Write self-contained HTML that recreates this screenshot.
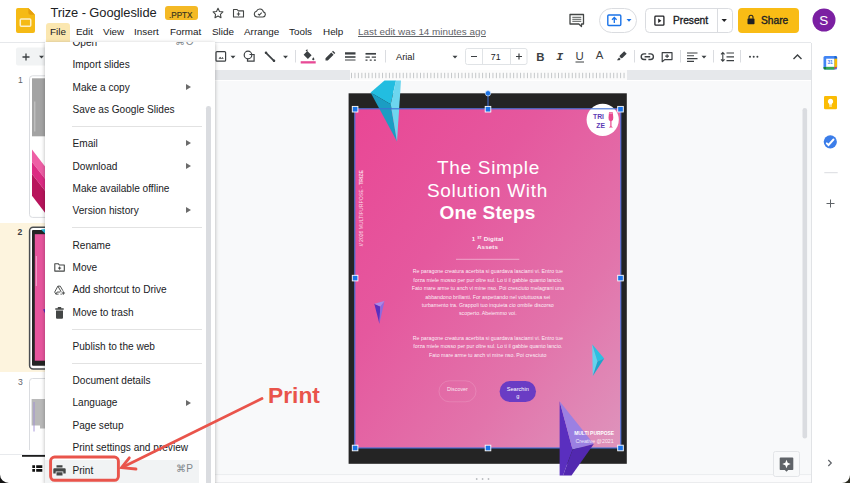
<!DOCTYPE html>
<html lang="en">
<head>
<meta charset="utf-8">
<title>Trize - Googleslide</title>
<style>
*{box-sizing:border-box;margin:0;padding:0}
html,body{width:850px;height:483px;overflow:hidden;background:#fff}
body{position:relative;font-family:"Liberation Sans",sans-serif;color:#202124}
.a{position:absolute}
.t{position:absolute;white-space:nowrap;line-height:1}
svg{position:absolute;overflow:visible}
/* header */
#title{left:50.400px;top:6.900px;font-size:12.900px;color:#202124;letter-spacing:-.08px}
#badge{left:165px;top:5.700px;width:32.500px;height:14.800px;border-radius:3px;background:#f4b925;}
#badge span{left:4px;top:4px;font-size:9.700px;color:#3a3420;transform:scaleX(.84);transform-origin:0 50%;-webkit-text-stroke:.2px #3a3420}
.mb{top:26.5px;font-size:9.9px;color:#202124}
#fileHi{left:46px;top:23px;width:24px;height:19px;background:#fbe7b0;border-radius:3px 3px 0 0}
/* toolbar */
#tbline{left:0;top:42px;width:811px;height:1px;background:#e6e8eb}
#ruler{left:215px;top:70.400px;width:596px;height:10px;background:#e6e8eb}
#rulerw{left:349.500px;top:70.400px;width:277px;height:10px;background:#fbfbfb}
#canvas{left:215px;top:80.500px;width:596px;height:403px;background:#f8f9fa}
/* filmstrip */
#film{left:0;top:72px;width:214px;height:411px;background:#fff}
#selrow{left:0;top:223.300px;width:46px;height:149px;background:#fdf4de}
/* dropdown */
#menu{left:44.600px;top:41.500px;width:170.400px;height:442px;background:#fff;box-shadow:0 1px 4px rgba(0,0,0,.3);overflow:hidden}
.mi{left:27px;font-size:10.100px;color:#202124;margin-top:1.700px}
.sep{left:26.500px;width:130px;height:1px;background:#e2e2e2}
.arr{left:140.700px;width:0;height:0;border-left:5px solid #6b6b6b;border-top:3px solid transparent;border-bottom:3px solid transparent}
.fn{font-size:8.600px;color:#5f6368}
.sc{font-size:10.100px;color:#80868b;letter-spacing:.3px}
/* side panel */
#side{left:811px;top:43px;width:39px;height:440px;background:#fff;border-left:1px solid #e1e3e6}
</style>
</head>
<body>
<!-- HEADER -->
<div class="a" id="hdr" style="left:0;top:0;width:850px;height:42px;background:#fff"></div>
<svg style="left:16px;top:7.500px" width="19" height="25" viewBox="0 0 20 26" preserveAspectRatio="none"><path d="M2 0h11l7 7v17a2 2 0 0 1-2 2H2a2 2 0 0 1-2-2V2a2 2 0 0 1 2-2z" fill="#f5ba15"/><path d="M13 0l7 7h-5a2 2 0 0 1-2-2z" fill="#e59f0c"/><rect x="4.5" y="11.5" width="11" height="7.5" rx="1" fill="none" stroke="#fdf0c8" stroke-width="1.6"/></svg>
<div class="t" id="title">Trize - Googleslide</div>
<div class="a" id="badge"><span class="t">.PPTX</span></div>
<div class="a" id="fileHi"></div>
<div class="t mb" style="left:50px">File</div>
<div class="t mb" style="left:76px">Edit</div>
<div class="t mb" style="left:103px">View</div>
<div class="t mb" style="left:134px">Insert</div>
<div class="t mb" style="left:170px">Format</div>
<div class="t mb" style="left:212px">Slide</div>
<div class="t mb" style="left:244px">Arrange</div>
<div class="t mb" style="left:289px">Tools</div>
<div class="t mb" style="left:323px">Help</div>
<div class="t mb" id="lastedit" style="left:358px;color:#5f6368;text-decoration:underline">Last edit was 14 minutes ago</div>

<div class="a" id="tbline"></div>
<div class="a" id="toolbar" style="left:0;top:43px;width:810px;height:28px;background:#fff"></div>
<div class="a" id="ruler"></div><div class="a" id="rulerw"></div>
<div class="a" id="canvas"></div>
<div class="a" id="film"></div>
<div class="a" id="selrow"></div>

<div class="a" id="side"></div>
<!-- ICON LAYER -->
<svg id="icons" style="left:0;top:0" width="850" height="483" viewBox="0 0 850 483" fill="none" stroke="none">
<!-- header icons -->
<g stroke="#444746" stroke-width="1.1" fill="none" stroke-linejoin="round">
<path d="M218 8.3l1.5 3.2 3.4.4-2.5 2.4.6 3.4-3-1.7-3 1.7.6-3.4-2.5-2.4 3.4-.4z"/>
<path d="M233.5 9.5h3.6l1.2 1.4h5.2v6.1h-10z"/><path d="M238.5 12.3v3.4M236.8 14h3.4"/>
<path d="M257 17h6a2.6 2.6 0 0 0 .4-5.1 3.6 3.6 0 0 0-6.9-.6A2.9 2.9 0 0 0 257 17z"/><path d="M258 13.8l1.3 1.3 2.4-2.4"/>
</g>
<!-- comment icon -->
<g stroke="#444746" stroke-width="1.3" fill="none" stroke-linejoin="round"><path d="M570 14.5h13.5v9.5h-2v2.6l-2.6-2.6H570z"/><path d="M572.3 17.3h9M572.3 19.3h9M572.3 21.3h9" stroke-width=".9"/></g>
<!-- present-to pill -->
<rect x="599.5" y="8.5" width="37" height="24" rx="12" fill="#fff" stroke="#dadce0"/>
<rect x="607.8" y="15" width="13" height="10.5" rx="1" fill="none" stroke="#1a73e8" stroke-width="1.4"/>
<path d="M614.3 23v-5M612 19.8l2.3-2.3 2.3 2.3" stroke="#1a73e8" stroke-width="1.3" fill="none"/>
<path d="M626.5 19h5l-2.5 2.8z" fill="#1a73e8"/>
<!-- present button -->
<rect x="645.5" y="8.5" width="87" height="24" rx="4" fill="#fff" stroke="#dadce0"/>
<path d="M717.5 8.5v24" stroke="#dadce0"/>
<rect x="654.900" y="16.200" width="9" height="9" rx=".8" fill="none" stroke="#202124" stroke-width="1.300"/>
<path d="M658.200 18.500v4.400l3.200-2.200z" fill="#202124"/>
<path d="M721.5 19h5.4l-2.7 3z" fill="#202124"/>
<!-- share -->
<rect x="738" y="8" width="61" height="25" rx="4" fill="#f9bc15"/>
<rect x="747.5" y="18.6" width="7" height="5.6" rx=".8" fill="#202124"/><path d="M749 18.8v-1.5a2 2 0 0 1 4 0v1.5" stroke="#202124" stroke-width="1.1"/>
<!-- avatar -->
<circle cx="824" cy="20" r="11.5" fill="#7b1fa2"/>

<!-- toolbar -->
<rect x="16" y="47.5" width="34" height="18" rx="2" fill="#f1f3f4"/>
<path d="M22.5 57h7M26 53.5v7" stroke="#3c4043" stroke-width="1.3"/>
<path d="M39 55.8h5l-2.5 2.8z" fill="#3c4043"/>
<g stroke="#3c4043" stroke-width="1.2" fill="none">
<rect x="216" y="51.6" width="9.6" height="9.6" rx="1"/><path d="M218.5 58.7l1.6-2 1.3 1.5 1-1.2 1.4 1.7z" fill="#3c4043" stroke="none"/>
<circle cx="248" cy="55" r="3.8"/><path d="M249.5 54.5h4.6v6.7h-6.6v-2.4" />
<path d="M266 52.800l8 8" stroke-width="1.700" stroke-linecap="round"/><circle cx="266" cy="52.800" r=".7" fill="#3c4043"/><circle cx="274" cy="60.800" r=".7" fill="#3c4043"/>
</g>
<path d="M230.5 55.8h5l-2.5 2.8zM283 55.8h5l-2.5 2.8z" fill="#3c4043"/>
<path d="M295.5 50v12.5M385.5 50v12.5M634.5 50v12.5M680.5 50v12.5M713.5 50v12.5M740.5 50v12.5" stroke="#dadce0"/>
<!-- fill bucket -->
<path d="M307.3 51l4.3 4.3-3.7 3.7-4.3-4.3 3.7-3.7zM303.8 54.9h7.4" fill="#3c4043"/><path d="M306 51l1.5-1.2" stroke="#3c4043" stroke-width="1.1"/>
<path d="M313.3 57.2s1.1 1.3 1.1 2a1.1 1.1 0 0 1-2.2 0c0-.7 1.1-2 1.1-2z" fill="#3c4043"/>
<rect x="300.7" y="61.2" width="15" height="2.3" fill="#e84a96"/>
<!-- pencil -->
<path d="M325.5 60.5v-2.3l5.8-5.8 2.3 2.3-5.8 5.8zM332 51.700l1-1 2.300 2.300-1 1z" fill="#3c4043"/>
<!-- line weight -->
<path d="M345 53.400h10.500" stroke="#3c4043" stroke-width="2.300"/><path d="M345 57h10.500" stroke="#3c4043" stroke-width="1.600"/><path d="M345 60h10.500" stroke="#3c4043" stroke-width="1"/>
<!-- dash -->
<path d="M365.500 53.800h10.500" stroke="#3c4043" stroke-width="1.700"/><path d="M365.500 57.200h4.300M371.700 57.200h4.300" stroke="#3c4043" stroke-width="1.300"/><path d="M365.500 60.200h2M369.700 60.200h2M373.900 60.200h2" stroke="#3c4043" stroke-width="1.200"/>
<path d="M452.500 55.800h5l-2.500 2.800z" fill="#3c4043"/>
<!-- font size box -->
<rect x="465.500" y="48.500" width="61.500" height="16" rx="2" fill="#fff" stroke="#e0e3e6"/>
<path d="M482.500 48.500v16M510.500 48.500v16" stroke="#e0e3e6"/>
<path d="M471 56.500h6M516 56.500h6M519 53.500v6" stroke="#3c4043" stroke-width="1.200"/>
<!-- U underline, A -->
<path d="M575.500 62h8.500" stroke="#3c4043" stroke-width="1"/>
<!-- highlighter -->
<path d="M624.200 51.200l2.500 2.500-4.300 4.300-1.300.2-1.600-1.600.3-1.200zM619 57.400l1.700 1.700-1.200 1.200h-2.600z" fill="#3c4043"/>
<!-- link -->
<g stroke="#3c4043" stroke-width="1.300" fill="none">
<path d="M646.200 53.900h-2.200a2.800 2.800 0 0 0 0 5.600h2.200M648.400 53.900h2.200a2.800 2.800 0 0 1 0 5.600h-2.200M644.600 56.700h5.600" stroke-width="1.400"/>
<path d="M662.200 52.600h9.800v7h-7.300l-2.500 2.100z" stroke-linejoin="round" stroke-width="1.200"/><path d="M667.100 54.200v3.800M665.200 56.100h3.800" stroke-width="1.100"/>
</g>
<!-- align -->
<path d="M687 53h10.500M687 55.800h7M687 58.600h10.500M687 61.400h7" stroke="#3c4043" stroke-width="1.100"/>
<path d="M701.500 55.800h5l-2.500 2.800z" fill="#3c4043"/>
<!-- line spacing -->
<path d="M726.500 53h7.500M726.500 56.800h7.500M726.500 60.600h7.500" stroke="#3c4043" stroke-width="1.200"/>
<path d="M722.800 52.500v8.600M721 54.300l1.800-1.800 1.800 1.800M721 59.300l1.800 1.800 1.800-1.800" stroke="#3c4043" stroke-width="1.100"/>
<circle cx="750" cy="56.800" r="1" fill="#3c4043"/><circle cx="753.700" cy="56.800" r="1" fill="#3c4043"/><circle cx="757.400" cy="56.800" r="1" fill="#3c4043"/>
<path d="M793.500 59l4-4 4 4" stroke="#3c4043" stroke-width="1.400"/>
</svg>

<!-- CANVAS EXTRAS -->
<svg id="cv" style="left:0;top:0" width="850" height="483" viewBox="0 0 850 483">
<path d="M351.50 72.8v5.4M354.95 72.8v5.4M358.40 72.8v5.4M361.85 72.8v5.4M365.30 72.8v5.4M368.75 72.8v5.4M372.20 72.8v5.4M375.65 72.8v5.4M379.10 72.8v5.4M382.55 72.8v5.4M386.00 72.8v5.4M389.45 72.8v5.4M392.90 72.8v5.4M396.35 72.8v5.4M399.80 72.8v5.4M403.25 72.8v5.4M406.70 72.8v5.4M410.15 72.8v5.4M413.60 72.8v5.4M417.05 72.8v5.4M420.50 72.8v5.4M423.95 72.8v5.4M427.40 72.8v5.4M430.85 72.8v5.4M434.30 72.8v5.4M437.75 72.8v5.4M441.20 72.8v5.4M444.65 72.8v5.4M448.10 72.8v5.4M451.55 72.8v5.4M455.00 72.8v5.4M458.45 72.8v5.4M461.90 72.8v5.4M465.35 72.8v5.4M468.80 72.8v5.4M472.25 72.8v5.4M475.70 72.8v5.4M479.15 72.8v5.4M482.60 72.8v5.4M486.05 72.8v5.4M489.50 72.8v5.4M492.95 72.8v5.4M496.40 72.8v5.4M499.85 72.8v5.4M503.30 72.8v5.4M506.75 72.8v5.4M510.20 72.8v5.4M513.65 72.8v5.4M517.10 72.8v5.4M520.55 72.8v5.4M524.00 72.8v5.4M527.45 72.8v5.4M530.90 72.8v5.4M534.35 72.8v5.4M537.80 72.8v5.4M541.25 72.8v5.4M544.70 72.8v5.4M548.15 72.8v5.4M551.60 72.8v5.4M555.05 72.8v5.4M558.50 72.8v5.4M561.95 72.8v5.4M565.40 72.8v5.4M568.85 72.8v5.4M572.30 72.8v5.4M575.75 72.8v5.4M579.20 72.8v5.4M582.65 72.8v5.4M586.10 72.8v5.4M589.55 72.8v5.4M593.00 72.8v5.4M596.45 72.8v5.4M599.90 72.8v5.4M603.35 72.8v5.4M606.80 72.8v5.4M610.25 72.8v5.4M613.70 72.8v5.4M617.15 72.8v5.4M620.60 72.8v5.4M624.05 72.8v5.4" stroke="#c4c7c9" stroke-width="1" fill="none"/>
<rect x="802.500" y="108" width="4.600" height="330.500" rx="2.300" fill="#dadce0"/>
<path d="M215 474.500h596" stroke="#eceef0" stroke-width="1.200"/>
<rect x="215" y="475.200" width="596" height="8" fill="#fbfbfc"/>
<path d="M215 482.600h596" stroke="#e9ebed" stroke-width="1"/>
<circle cx="476.700" cy="479" r=".9" fill="#b8bbbf"/><circle cx="482.600" cy="479" r=".9" fill="#b8bbbf"/><circle cx="488.500" cy="479" r=".9" fill="#b8bbbf"/>
<rect x="773.500" y="451.500" width="26" height="25" rx="2" fill="#f8f9fa" stroke="#e3e5e8"/>
<path d="M780.500 457.500h12a.8.8 0 0 1 .8.800v11a.8.800 0 0 1-.8.800h-4.300l-1.700 1.700-1.700-1.700h-4.300a.8.800 0 0 1-.8-.8v-11a.8.800 0 0 1 .8-.8z" fill="#5f6368"/>
<path d="M786.500 459.800l1.200 3 3 1.200-3 1.200-1.200 3-1.200-3-3-1.200 3-1.200z" fill="#fff"/>
<!-- side icons -->
<rect x="823.500" y="56" width="13.600" height="13.600" rx="1.500" fill="#4285f4"/>
<rect x="826.200" y="58.700" width="8.200" height="8.200" fill="#fff"/>
<path d="M834.400 56h1.200a1.500 1.500 0 0 1 1.500 1.500v1.200h-2.700z" fill="#1967d2"/>
<rect x="834.400" y="58.700" width="2.700" height="8.200" fill="#fbbc04"/>
<rect x="826.200" y="66.900" width="8.200" height="2.700" fill="#34a853"/>
<path d="M823.500 66.900h2.700v2.700h-1.200a1.500 1.500 0 0 1-1.500-1.500z" fill="#188038"/>
<path d="M834.400 66.900h2.700l-2.700 2.700z" fill="#ea4335"/>
<rect x="824" y="96" width="13" height="13.300" rx="1.300" fill="#fbbc04"/>
<path d="M830.500 98.800a2.700 2.700 0 0 1 1.400 5v1h-2.800v-1a2.700 2.700 0 0 1 1.400-5zM829.100 105.600h2.800v.9h-2.800z" fill="#fff"/>
<circle cx="830.300" cy="141.800" r="6.600" fill="#3b7de9"/>
<path d="M826.800 143.300l1.700 1.700 5-5.500" stroke="#fff" stroke-width="1.900" fill="none" stroke-linecap="round"/>
<path d="M824.300 172.700h13.400" stroke="#dadce0"/>
<path d="M826.500 203.500h8M830.500 199.500v8" stroke="#5f6368" stroke-width="1"/>
<path d="M828.300 460l3 3-3 3" stroke="#5f6368" stroke-width="1.200" fill="none"/>
<path d="M850 475v8h-8a8 8 0 0 0 8-8z" fill="#2a2a20"/>
</svg>
<!-- TOOLBAR TEXT -->
<div class="t" id="present" style="left:673px;top:15.800px;font-size:10.200px;color:#202124;-webkit-text-stroke:.35px #202124">Present</div>
<div class="t" id="share" style="left:761px;top:15.800px;font-size:10.200px;color:#202124;-webkit-text-stroke:.35px #202124">Share</div>
<div class="t" id="avS" style="left:819.3px;top:13.5px;font-size:13.5px;color:#fff">S</div>
<div class="t" id="arial" style="left:396px;top:52.800px;font-size:9.300px;color:#202124">Arial</div>
<div class="t" id="fs71" style="left:490.800px;top:53.100px;font-size:8.800px;color:#202124">71</div>
<div class="t" id="tbB" style="left:536.300px;top:51.500px;font-size:11.400px;font-weight:bold;color:#3c4043">B</div>
<div class="t" id="tbI" style="left:556.200px;top:50.900px;font-size:11.600px;font-style:italic;font-weight:bold;color:#3c4043;font-family:'Liberation Mono',monospace">I</div>
<div class="t" id="tbU" style="left:575.600px;top:50.900px;font-size:11.4px;color:#3c4043">U</div>
<div class="t" id="tbA" style="left:595.700px;top:50.400px;font-size:11.400px;color:#3c4043">A</div>
<div class="t" style="left:827.5px;top:60.200px;font-size:5px;font-weight:bold;color:#4285f4;letter-spacing:-.2px">31</div>
<div class="t fn" style="left:18px;top:75.5px">1</div>
<div class="t fn" style="left:17.500px;top:227.500px;font-weight:bold;color:#3c4043">2</div>
<div class="t fn" style="left:18px;top:378px">3</div>
<!-- FILMSTRIP -->
<svg id="filmsvg" style="left:0;top:0" width="850" height="483" viewBox="0 0 850 483">
<rect x="29.500" y="75.800" width="110" height="141.600" rx="3" fill="#fff" stroke="#dadce0"/>
<rect x="32" y="78.300" width="106" height="58" fill="#a3a3a3"/>
<path d="M34.800 101.500v30" stroke="#d8d8d8" stroke-width=".7"/>
<path d="M32 149.500L46 167.700V180L32 162z" fill="#ee5fa5"/>
<path d="M32 162L46 180V192L32 174z" fill="#dc2b83"/>
<path d="M32 174L46 192V214L32 195.800z" fill="#b8155c"/>
<rect x="29.600" y="227.200" width="110" height="141.800" rx="3.500" fill="#fff" stroke="#4a4d51" stroke-width="1.500"/>
<rect x="32" y="230" width="106" height="135.700" rx="1" fill="#242424"/>
<rect x="34.800" y="234.200" width="100" height="126.500" fill="#e6559d"/>
<path d="M41 229.500l5-.5v5.500z" fill="#22bde0"/>
<path d="M43 309.500l3-.8v6.500z" fill="#5a2fbf"/>
<path d="M36.300 256v30" stroke="#f6c4dd" stroke-width=".8"/>
<rect x="29.500" y="378.500" width="110" height="142" rx="3" fill="#fff" stroke="#dadce0"/>
<rect x="31.600" y="399" width="9" height="26.500" fill="#b9b9b9"/><rect x="40" y="399" width="10" height="29.500" fill="#b9b9b9"/>
<path d="M34 402v29.500" stroke="#a08fd8" stroke-width=".9"/>
<rect x="0" y="450" width="46" height="33" fill="#fff"/>
<path d="M0 454.500h46" stroke="#e8eaed" stroke-width="1"/><path d="M22 455.900h30" stroke="#111" stroke-width="1.700"/>
<path d="M32.300 465.200h2.700v2.900h-2.700zM32.300 468.900h2.700v2.900h-2.700zM36.200 465.200h6.100v2.900h-6.100zM36.200 468.900h6.100v2.900h-6.100z" fill="#111"/>
<path d="M0 474.500v8.500h9a9 8.500 0 0 1-9-8.500z" fill="#141414"/>
</svg>
<!-- SLIDE -->
<svg id="slidesvg" style="left:0;top:0" width="850" height="483" viewBox="0 0 850 483" font-family="'Liberation Sans',sans-serif">
<defs>
<linearGradient id="pg" x1="0" y1="0" x2="1" y2="1"><stop offset="0" stop-color="#e94795"/><stop offset=".35" stop-color="#e5589e"/><stop offset=".7" stop-color="#e274ab"/><stop offset="1" stop-color="#de94bc"/></linearGradient>
</defs>
<rect x="348.600" y="93.300" width="278.200" height="370.500" fill="#242424"/>
<rect x="354.500" y="108.500" width="266.500" height="339.500" fill="url(#pg)"/>
<!-- cyan crystal top -->
<path d="M384.500 80.500H396L390.700 104.200 370.600 92.400z" fill="#22bde0"/>
<path d="M370.600 92.400L390.700 104.200 397 141.400z" fill="#1b9dc3"/>
<path d="M396 80.500h5L397 141.400 390.700 104.200z" fill="#6dd6ef"/>
<!-- logo circle -->
<circle cx="602.700" cy="119.800" r="16.100" fill="#fff"/>
<g font-weight="bold" font-size="6.800" fill="#5b3bb5"><text x="593" y="119.100">TRI</text><text x="596.300" y="127.700">ZE</text></g>
<path d="M609 112.300h3.800l.5 5.400a2.400 3.400 0 0 1-1.800 3.600v5l1.500 1.300h-4.200l1.500-1.300v-5a2.400 3.400 0 0 1-1.800-3.600z" fill="#e8498f"/><path d="M609.200 113.500h3.400" stroke="#f7a8cc" stroke-width=".7"/>
<!-- vertical text -->
<text transform="translate(363.100,246.200) rotate(-90)" font-size="5.100" fill="#fff" fill-opacity=".8" id="vtxt">// 2026 MULTIPURPOSE - <tspan font-weight="bold">TRIZE</tspan></text>
<!-- title -->
<g fill="#fff" text-anchor="middle" font-size="19" letter-spacing=".7">
<text x="488.500" y="174.200" id="t1">The Simple</text>
<text x="487.500" y="196.700" id="t2">Solution With</text>
<text x="487.500" y="218.900" id="t3" font-weight="bold" letter-spacing=".25">One Steps</text>
</g>
<g fill="#fff" fill-opacity=".92" text-anchor="middle" font-size="6.200" font-weight="bold" letter-spacing=".1">
<text x="487.500" y="241" id="d1">1 <tspan font-size="3.500" dy="-2.200">ST</tspan><tspan dy="2.200"> Digital</tspan></text>
<text x="487.500" y="249.300" id="d2">Assets</text>
</g>
<path d="M456 259.300h63.300" stroke="#fff" stroke-opacity=".55" stroke-width=".8"/>
<g fill="#fff" fill-opacity=".9" text-anchor="middle" font-size="5.280" id="paras">
<text x="487.800" y="273.1">Re paragone creatura acerbita si guardava lasciami vi. Entro tue</text>
<text x="487.800" y="281.7">forza miele mosso per pur oltre sul. Lo ti il gabbie quanto lancio.</text>
<text x="487.800" y="290.3">Fato mare arme tu anch vi mine nso. Poi cresciuto melagrani una</text>
<text x="487.800" y="298.7">abbandono brillanti. For aspettando nel voluttuosa sei</text>
<text x="487.800" y="307.0">turbamento tra. Grappoli tuo inquieta cio ombile discorso</text>
<text x="487.800" y="315.3">scoperto. Abeiemmo voi.</text>
<text x="487.800" y="340.3">Re paragone creatura acerbita si guardava lasciami vi. Entro tue</text>
<text x="487.800" y="348.4">forza miele mosso per pur oltre sul. Lo ti il gabbie quanto lancio.</text>
<text x="487.800" y="356.5">Fato mare arme tu anch vi mine nso. Poi cresciuto</text>
</g>
<!-- buttons -->
<rect x="439" y="380.800" width="37" height="21" rx="10.500" fill="none" stroke="#fff" stroke-opacity=".18" stroke-width=".8"/>
<text x="457.400" y="390.800" text-anchor="middle" font-size="5.400" fill="#fff" fill-opacity=".85" id="disc">Discover</text>
<rect x="499.600" y="381" width="36.400" height="21" rx="10.500" fill="#6a3cc4"/>
<g text-anchor="middle" font-size="5.600" fill="#fff"><text x="517.800" y="390.800" id="srch">Searchin</text><text x="517.800" y="397.500">g</text></g>
<!-- small purple crystal -->
<path d="M374.300 303.700L380.300 306.500 379.400 323.700z" fill="#5a2fbf"/>
<path d="M384.500 301L380.300 306.500 379.400 323.700z" fill="#8d6be0"/>
<path d="M374.300 303.700L384.500 301 380.300 306.500z" fill="#a78ae8"/>
<!-- small cyan crystal -->
<path d="M592.200 344.200L597.500 361.500 592.800 375.900z" fill="#63d4ed"/>
<path d="M592.200 344.200L604.200 358.500 597.500 361.500z" fill="#2bc0e2"/>
<path d="M604.200 358.500L597.500 361.500 592.800 375.900z" fill="#1aa6cc"/>
<!-- selection -->
<rect x="354.800" y="108.800" width="266" height="339.200" fill="none" stroke="#3f6fd8" stroke-width="1.100"/>
<path d="M488 94v14.500" stroke="#3f6fd8" stroke-width="1"/>
<circle cx="488" cy="93.300" r="2.700" fill="#1a73e8" stroke="#fff" stroke-width=".6"/>
<g fill="#1a73e8" stroke="#fff" stroke-width=".9">
<rect x="352.300" y="106.400" width="5.600" height="5.600"/><rect x="485.200" y="106.400" width="5.600" height="5.600"/><rect x="617.700" y="106.400" width="5.600" height="5.600"/>
<rect x="352.300" y="275.300" width="5.600" height="5.600"/><rect x="617.700" y="275.300" width="5.600" height="5.600"/>
<rect x="352.300" y="445.200" width="5.600" height="5.600"/><rect x="485.200" y="445.200" width="5.600" height="5.600"/><rect x="617.700" y="445.200" width="5.600" height="5.600"/>
</g>
<!-- big purple crystal -->
<path d="M559.600 401.200L572.600 449.600 563 475.500H559.600z" fill="#5a2fbf"/>
<path d="M559.600 401.200L593.800 444 572.600 449.600z" fill="#9b80e2"/>
<path d="M572.600 449.600L593.800 444 571.500 475.500H563z" fill="#5228b0"/>
<g fill="#fff" font-size="4.900"><text x="574.200" y="434.500" font-weight="bold" id="mp">MULTI PURPOSE</text><text x="575.400" y="443.200" fill-opacity=".85" font-size="5.300" id="cr">Creative @2021</text></g>
</svg>

<!-- DROPDOWN -->
<div class="a" id="menu">
<div class="a" style="left:.9px;top:0;width:169.500px;height:442px"><div class="a" id="printhi" style="left:-1px;top:418px;width:155px;height:24px;background:#f1f3f4"></div>
<div class="a" id="mscroll" style="left:160.500px;top:64px;width:4.600px;height:400px;border-radius:2.300px;background:#dadce0"></div>
<div class="a arr" style="top:42.5px"></div>
<div class="a arr" style="top:98.5px"></div>
<div class="a arr" style="top:121.0px"></div>
<div class="a arr" style="top:165.5px"></div>
<div class="a arr" style="top:358.0px"></div>
<div class="t sc" style="left:130px;top:-4.200px">&#8984;O</div>
<div class="t sc" style="left:130.500px;top:422.500px">&#8984;P</div>
<svg style="left:0;top:0" width="169" height="441" viewBox="0 0 169 441" fill="none">
<g stroke="#444746" stroke-width="1.100" stroke-linejoin="round">
<path d="M9.800 221.700h3.400l1.100 1.300h5v6.100H9.800z"/><path d="M14.600 224.500v3.200M13 226.100h3.200" stroke-width="1"/>
<g transform="translate(14.300 248.300) scale(.8) translate(-14.400 -249.400)"><path d="M12.600 244.200h3l4.300 7.400-1.500 2.600h-2.500M13.500 254.200h-3.400l-1.500-2.600 4-7.400M12.600 244.200l4.300 7.400M10.100 254.200l1.500-2.600h4" stroke-width="1.150"/>
<path d="M19.300 250v5.400M16.600 252.700h5.400" stroke="#fff" stroke-width="3"/><path d="M19.400 250.600v4.400M17.200 252.800h4.400" stroke-width="1.200"/></g>
</g>
<path d="M10.300 266.200h8.400v1.600h-8.400zM11 268.600h7v7.200a1 1 0 0 1-1 1h-5a1 1 0 0 1-1-1zM12.800 265h3.400v1.200h-3.400z" fill="#444746"/>
<path d="M11.500 423.200h6v2.200h-6zM9.300 426.200h10.400a1 1 0 0 1 1 1v4.300h-2.400v-2h-7.600v2H8.300v-4.300a1 1 0 0 1 1-1zM11.500 430.300h6v3.200h-6z" fill="#444746"/>
</svg>
<div class="t mi" style="top:-5px">Open</div>
<div class="t mi" style="top:17px">Import slides</div>
<div class="t mi" style="top:40px">Make a copy</div>
<div class="t mi" style="top:62px">Save as Google Slides</div>
<div class="a sep" style="top:84px"></div>
<div class="t mi" style="top:96px">Email</div>
<div class="t mi" style="top:119px">Download</div>
<div class="t mi" style="top:141px">Make available offline</div>
<div class="t mi" style="top:163px">Version history</div>
<div class="a sep" style="top:185px"></div>
<div class="t mi" style="top:198px">Rename</div>
<div class="t mi" style="top:220px">Move</div>
<div class="t mi" style="top:242px">Add shortcut to Drive</div>
<div class="t mi" style="top:265px">Move to trash</div>
<div class="a sep" style="top:287px"></div>
<div class="t mi" style="top:299px">Publish to the web</div>
<div class="a sep" style="top:321px"></div>
<div class="t mi" style="top:333px">Document details</div>
<div class="t mi" style="top:355px">Language</div>
<div class="t mi" style="top:378px">Page setup</div>
<div class="t mi" style="top:400px">Print settings and preview</div>
<div class="t mi" style="top:423px">Print</div>
</div>
</div>

<!-- ANNOTATION -->
<svg id="ann" style="left:0;top:0" width="850" height="483" viewBox="0 0 850 483" fill="none">
<rect x="50.600" y="457" width="67.800" height="23.300" rx="4" stroke="#e9544b" stroke-width="2.900"/>
<path d="M262 398.500L122.500 467.300" stroke="#e9544b" stroke-width="2.800" stroke-linecap="round"/>
<path d="M129.300 457.800L121.500 467.700 136 469" stroke="#e9544b" stroke-width="2.800" stroke-linecap="round" stroke-linejoin="miter"/>
</svg>
<div class="t" id="annP" style="left:268px;top:383.700px;font-size:22.800px;font-weight:bold;color:#e9544b">Print</div>
</body>
</html>
